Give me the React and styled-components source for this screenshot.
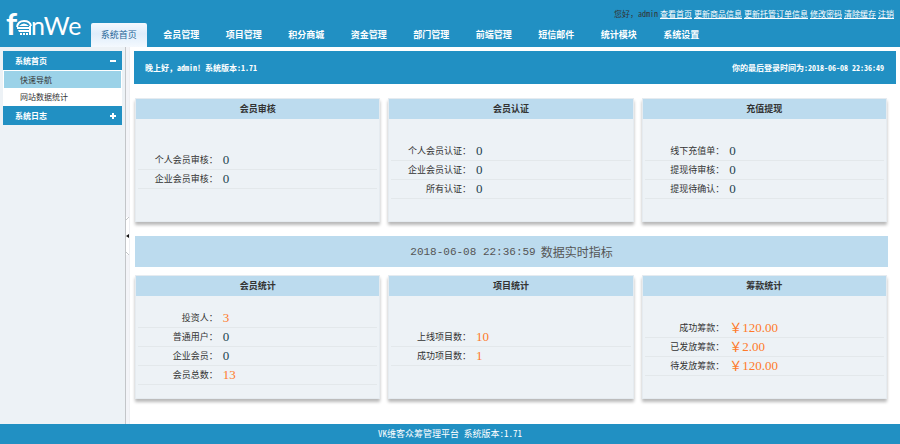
import React from "react";
import styled, { createGlobalStyle, css } from "styled-components";

const blue = "#2190c3";
const pale = "#bcdbee";
const mist = "#edf2f6";

const GlobalStyle = createGlobalStyle`
  * { box-sizing: border-box; }
  body {
    margin: 0;
    background: #fff;
    color: #333;
    font: 9px/12px "Noto Sans Mono CJK SC", "Noto Sans CJK SC", "Liberation Mono", monospace;
  }
  a { color: inherit; }
  button { font: inherit; border: 0; padding: 0; cursor: pointer; }
`;

const Page = styled.div`
  display: flex;
  flex-direction: column;
  min-height: 100vh;
`;

const Header = styled.header`
  display: flex;
  height: 47px;
  background: ${blue};
`;

const LogoLink = styled.a`
  flex: 0 0 91px;
  padding-left: 5px;
  svg { display: block; }
`;

const HeaderBody = styled.div`
  flex: 1;
  display: flex;
  flex-direction: column;
  justify-content: space-between;
`;

const UserBar = styled.div`
  display: flex;
  justify-content: flex-end;
  gap: 2px;
  padding: 8px 6px 0 0;
  font-size: 8px;
  line-height: 12px;
  white-space: nowrap;
`;

const UserLink = styled.a`
  color: #fff;
  text-decoration: underline;
`;

const Nav = styled.nav`
  display: grid;
  grid-template-columns: repeat(10, 1fr);
  column-gap: 7px;
  max-width: 618px;
`;

const NavLink = styled.a`
  height: 24px;
  border-radius: 2px 2px 0 0;
  color: #fff;
  font-weight: 700;
  line-height: 24px;
  text-align: center;
  text-decoration: none;
  white-space: nowrap;
  ${(p) => p.$active && css`
    background: linear-gradient(#f4f9ff, #dfedfb 45%, #f4f9fe);
    color: #1f6596;
    font-weight: 500;
  `}
`;

const Body = styled.div`
  flex: 1;
  display: flex;
`;

const Sidebar = styled.aside`
  flex: 0 0 125px;
  padding: 4px 3px;
  background: ${mist};
  font-size: 8px;
`;

const MenuHead = styled.button`
  display: flex;
  align-items: center;
  justify-content: space-between;
  width: 100%;
  height: 19px;
  padding: 0 6px 0 12px;
  background: ${blue};
  color: #fff;
  && { font-weight: 700; }
`;

const MenuList = styled.ul`
  margin: 0;
  padding: 1px;
  list-style: none;
  background: #fff;
`;

const MenuLink = styled.a`
  display: block;
  padding-left: 16px;
  line-height: 17px;
  text-decoration: none;
  background: ${(p) => (p.$active ? "#9bd2e8" : "#fff")};
`;

const Splitter = styled.div`
  flex: 0 0 5px;
  display: flex;
  align-items: center;
  border-left: 1px solid #c3c6c9;
  border-right: 1px solid #eeeff2;
  background: #f3f4f8;
`;

const SplitButton = styled.button`
  width: 3px;
  height: 38px;
  background: #fff;
  svg { display: block; }
`;

const Main = styled.main`
  flex: 1;
  min-width: 0;
  padding: 4px 4px 0;
`;

const Banner = styled.div`
  display: flex;
  align-items: center;
  justify-content: space-between;
  height: 33px;
  padding: 0 12px 0 11px;
  background: ${blue};
  color: #fff;
  font-size: 8px;
  font-weight: 700;
`;

const Dashboard = styled.div`
  padding: 14px 8px 0 1px;
`;

const CardGrid = styled.section`
  display: grid;
  grid-template-columns: repeat(3, 1fr);
  gap: 8px;
  padding-right: 1px;
`;

const Card = styled.article`
  display: flex;
  flex-direction: column;
  min-height: 124px;
  border: 1px solid #e5ebf0;
  background: ${mist};
  box-shadow: 0 3px 3px rgba(0, 0, 0, 0.28);
`;

const CardTitle = styled.h2`
  margin: 0;
  background: ${pale};
  font-size: 9px;
  font-weight: 700;
  line-height: 20px;
  text-align: center;
`;

const Metrics = styled.dl`
  flex: 1;
  display: flex;
  flex-direction: column;
  justify-content: center;
  margin: 0;
  padding: 0 2px;
`;

const Metric = styled.div`
  display: grid;
  grid-template-columns: 34fr 66fr;
  align-items: center;
  column-gap: 5px;
  height: 19px;
  border-bottom: 1px solid #e3e8eb;
`;

const Label = styled.dt`
  text-align: right;
  white-space: nowrap;
`;

const Value = styled.dd`
  margin: 0;
  color: ${(p) => (p.$hot ? "#ff7a2a" : "#24424f")};
  font-family: "Liberation Serif", "Noto Sans CJK SC", serif;
  font-size: 13px;
  line-height: 18px;
`;

const LiveTitle = styled.h1`
  display: flex;
  align-items: center;
  justify-content: center;
  gap: 5px;
  height: 31px;
  margin: 14px 0 8px;
  background: ${pale};
  color: #555;
  font-size: 12px;
  font-weight: 400;
`;

const Timestamp = styled.time`
  font-family: "Liberation Mono", monospace;
  font-size: 11px;
`;

const Footer = styled.footer`
  background: ${blue};
  color: #fff;
  line-height: 20px;
  text-align: center;
`;

const Logo = () => (
  <svg width="82" height="46" viewBox="0 0 82 46" role="img" aria-label="fanWe" fill="#fff">
    <g fontFamily="Lato, sans-serif">
      <text x="1" y="35" fontSize="31" fontWeight="700">f</text>
      <text x="26" y="35" fontSize="25">nWe</text>
    </g>
    <path d="M12 27Q13 21 19 21Q25 21 26 26" fill="none" stroke="#fff" strokeWidth="2" />
    <path d="M14 26Q19 21 24 26ZM12 27H26V29H12ZM13 30H25L24 32H14ZM15 33H17V35H15ZM18 33H20V35H18ZM21 33H23V35H21ZM24 26H26V35H24Z" />
  </svg>
);

const ToggleMark = ({ open }) => (
  <svg width="6" height="6" viewBox="0 0 6 6" aria-hidden="true" stroke="#fff" strokeWidth="2">
    <path d={open ? "M0 3H6" : "M0 3H6M3 0V6"} />
  </svg>
);

const navItems = ["系统首页", "会员管理", "项目管理", "积分商城", "资金管理", "部门管理", "前端管理", "短信邮件", "统计模块", "系统设置"];
const userLinks = ["查看首页", "更新商品信息", "更新托管订单信息", "修改密码", "清除缓存", "注销"];

const pending = [
  { title: "会员审核", rows: [["个人会员审核", "0"], ["企业会员审核", "0"]] },
  { title: "会员认证", rows: [["个人会员认证", "0"], ["企业会员认证", "0"], ["所有认证", "0"]] },
  { title: "充值提现", rows: [["线下充值单", "0"], ["提现待审核", "0"], ["提现待确认", "0"]] },
];

const totals = [
  { title: "会员统计", rows: [["投资人", "3"], ["普通用户", "0"], ["企业会员", "0"], ["会员总数", "13"]] },
  { title: "项目统计", rows: [["上线项目数", "10"], ["成功项目数", "1"]] },
  { title: "筹款统计", rows: [["成功筹款", "￥120.00"], ["已发放筹款", "￥2.00"], ["待发放筹款", "￥120.00"]] },
];

const Cards = ({ items }) => (
  <CardGrid>
    {items.map(({ title, rows }) => (
      <Card key={title}>
        <CardTitle>{title}</CardTitle>
        <Metrics>
          {rows.map(([label, value]) => (
            <Metric key={label}>
              <Label>{label}：</Label>
              <Value $hot={value !== "0"}>{value}</Value>
            </Metric>
          ))}
        </Metrics>
      </Card>
    ))}
  </CardGrid>
);

export default function App() {
  return (
    <Page lang="zh-CN">
      <GlobalStyle />
      <Header>
        <LogoLink href="#home"><Logo /></LogoLink>
        <HeaderBody>
          <UserBar>
            <span>您好，admin</span>
            {userLinks.map((t) => <UserLink key={t} href="#user">{t}</UserLink>)}
          </UserBar>
          <Nav>
            {navItems.map((t, i) => <NavLink key={t} href="#nav" $active={i === 0}>{t}</NavLink>)}
          </Nav>
        </HeaderBody>
      </Header>
      <Body>
        <Sidebar>
          <MenuHead type="button" aria-expanded="true">系统首页<ToggleMark open /></MenuHead>
          <MenuList>
            <li><MenuLink href="#quick" $active>快速导航</MenuLink></li>
            <li><MenuLink href="#stats">网站数据统计</MenuLink></li>
          </MenuList>
          <MenuHead type="button" aria-expanded="false">系统日志<ToggleMark /></MenuHead>
        </Sidebar>
        <Splitter>
          <SplitButton type="button" aria-label="收起菜单">
            <svg width="3" height="38" viewBox="0 0 3 38" aria-hidden="true">
              <path d="M0 3L3 0M0 35L3 38" stroke="#c3c6c9" />
              <path d="M0 19L3 17V21Z" fill="#111" />
            </svg>
          </SplitButton>
        </Splitter>
        <Main>
          <Banner>
            <span>晚上好，admin! 系统版本:1.71</span>
            <span>你的最后登录时间为:2018-06-08 22:36:49</span>
          </Banner>
          <Dashboard>
            <Cards items={pending} />
            <LiveTitle>
              <Timestamp>2018-06-08 22:36:59</Timestamp>
              <span>数据实时指标</span>
            </LiveTitle>
            <Cards items={totals} />
          </Dashboard>
        </Main>
      </Body>
      <Footer>VK维客众筹管理平台 系统版本:1.71</Footer>
    </Page>
  );
}
